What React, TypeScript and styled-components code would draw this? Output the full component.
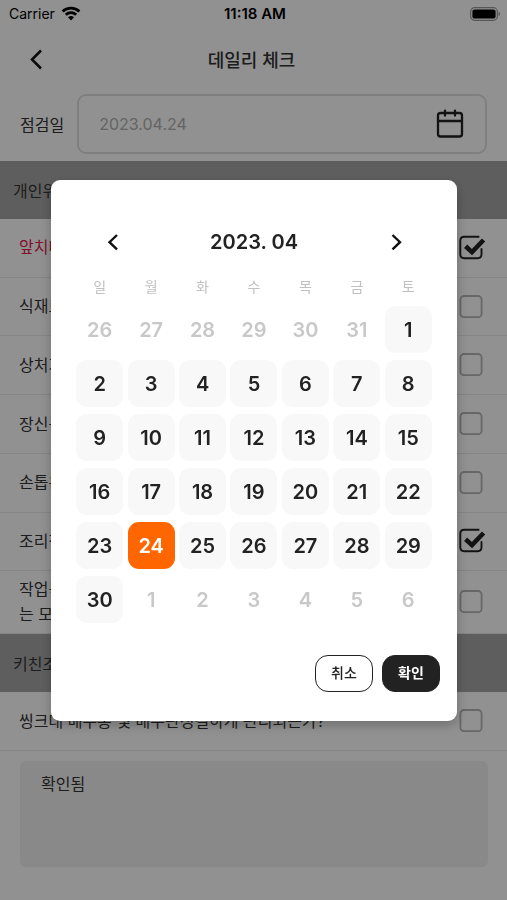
import React, { useState } from "react";
import styled, { createGlobalStyle } from "styled-components";

const GlobalStyle = createGlobalStyle`
  *, *::before, *::after { box-sizing: border-box; }
  body {
    margin: 0;
    background: #fff;
    color: #333;
    font-family: Inter, "Noto Sans CJK KR", sans-serif;
  }
  button, input, textarea { font: inherit; color: inherit; }
  button { cursor: pointer; }
`;

const Page = styled.div`
  min-height: 100vh;
`;

const StatusBar = styled.div`
  display: grid;
  grid-template-columns: 1fr auto 1fr;
  align-items: center;
  height: 27px;
  padding: 0 6px 0 9px;
  font-size: 14px;
  color: #000;
`;

const Carrier = styled.span`
  display: flex;
  align-items: center;
  gap: 6px;
`;

const Clock = styled.time`
  font-size: 15px;
  font-weight: 600;
`;

const Battery = styled.span`
  display: flex;
  justify-content: flex-end;
`;

const NavBar = styled.header`
  display: grid;
  grid-template-columns: 32px 1fr 32px;
  align-items: center;
  height: 63px;
  padding: 0 24px 0 20px;
`;

const IconButton = styled.button`
  display: grid;
  place-items: center;
  width: 32px;
  height: 32px;
  padding: 0;
  border: 0;
  background: none;
  color: #111;
`;

const Title = styled.h1`
  margin: 0;
  font-size: 18px;
  font-weight: 500;
  text-align: center;
`;

const DateRow = styled.div`
  display: flex;
  align-items: center;
  gap: 13px;
  padding: 4px 20px 7px;
`;

const DateLabel = styled.label`
  flex: none;
  font-size: 16px;
`;

const DateBox = styled.div`
  display: flex;
  flex: 1;
  align-items: center;
  height: 60px;
  min-width: 0;
  padding: 0 19px 0 20px;
  border: 2px solid #e0e0e0;
  border-radius: 9px;
`;

const DateInput = styled.input`
  flex: 1;
  min-width: 0;
  padding: 0;
  border: 0;
  outline: 0;
  background: none;
  font-size: 16px;
  color: #b0b0b0;
`;

const SectionTitle = styled.h2`
  display: flex;
  align-items: center;
  height: 58px;
  margin: 0;
  padding: 0 13px;
  background: #a6a6a6;
  font-size: 16px;
  font-weight: 400;
`;

const CheckList = styled.ul<{ $minHeight: number }>`
  display: flex;
  flex-direction: column;
  min-height: ${(p) => p.$minHeight}px;
  margin: 0;
  padding: 0;
  list-style: none;
`;

const CheckItem = styled.li<{ $tall?: boolean }>`
  display: flex;
  flex: 1 0 ${(p) => (p.$tall ? 62 : 58)}px;
  border-bottom: 1px solid #eaeaea;
`;

const CheckLabel = styled.label<{ $alert?: boolean }>`
  display: flex;
  flex: 1;
  align-items: center;
  justify-content: space-between;
  gap: 20px;
  padding: 0 20px 0 19px;
  font-size: 16px;
  line-height: 25px;
  color: ${(p) => (p.$alert ? "#e0204f" : "#333")};
`;

const ItemText = styled.span`
  white-space: pre-line;
`;

const TickWrap = styled.span`
  display: grid;
  flex: none;
  width: 28px;
  height: 28px;

  & > * { grid-area: 1 / 1; }
`;

const TickInput = styled.input`
  width: 28px;
  height: 28px;
  margin: 0;
  opacity: 0;
`;

const Notes = styled.div`
  padding: 10px 19px 32px 20px;
`;

const NotesArea = styled.textarea`
  display: block;
  width: 100%;
  height: 106px;
  padding: 11px 21px;
  border: 0;
  border-radius: 6px;
  outline: 0;
  resize: none;
  background: #f1f1f1;
  font-size: 16px;
  line-height: 24px;
`;

const Overlay = styled.div`
  position: fixed;
  inset: 0;
  display: flex;
  align-items: center;
  justify-content: center;
  padding: 0 50px 0 51px;
  background: rgba(0, 0, 0, 0.43);
`;

const Dialog = styled.section`
  width: 100%;
  max-width: 440px;
  padding: 46px 0 29px;
  border-radius: 9px;
  background: #fff;
  box-shadow: 0 4px 12px rgba(0, 0, 0, 0.25);
`;

const MonthBar = styled.div`
  display: flex;
  align-items: center;
  justify-content: space-between;
  padding: 0 45px;
`;

const MonthTitle = styled.h2`
  margin: 0;
  font-size: 20px;
  font-weight: 600;
  line-height: 32px;
  color: #222;
`;

const CalendarWrap = styled.div`
  padding: 13px 23px 0;
`;

const Calendar = styled.table`
  width: 100%;
  table-layout: fixed;
  border-collapse: collapse;
`;

const Weekday = styled.th`
  height: 32px;
  padding: 0;
  font-size: 14px;
  font-weight: 400;
  line-height: 20px;
  color: #c0c0c0;
`;

const DayCell = styled.td`
  height: 54px;
  padding: 0;
`;

const Day = styled.button<{ $outside: boolean; $selected: boolean }>`
  display: block;
  width: 47px;
  height: 47px;
  margin: 0 auto;
  padding: 0;
  border: 0;
  border-radius: 11px;
  font-size: 20px;
  font-weight: 600;
  background: ${(p) => (p.$selected ? "#ff6600" : p.$outside ? "transparent" : "#f8f8f8")};
  color: ${(p) => (p.$selected ? "#fff" : p.$outside ? "#c8c8c8" : "#222")};
`;

const Actions = styled.div`
  display: flex;
  justify-content: flex-end;
  gap: 9px;
  padding: 28px 17px 0;
`;

const ActionButton = styled.button<{ $primary?: boolean }>`
  width: 58px;
  height: 37px;
  padding: 0;
  border: 1px solid #222;
  border-radius: 13px;
  background: ${(p) => (p.$primary ? "#222" : "#fff")};
  color: ${(p) => (p.$primary ? "#fff" : "#222")};
  font-size: 14px;
  font-weight: ${(p) => (p.$primary ? 700 : 500)};
  line-height: 20px;
`;

function Chevron({ right = false }: { right?: boolean }) {
  return (
    <svg width="20" height="20" viewBox="0 0 20 20" fill="none" stroke="currentColor" strokeWidth="2.4" aria-hidden="true">
      <path d={right ? "M6.5 3l7.5 7.2-7.5 7.2" : "M15 3l-7.5 7.2 7.5 7.2"} />
    </svg>
  );
}

function BackIcon() {
  return (
    <svg width="24" height="24" viewBox="0 0 24 24" fill="none" stroke="currentColor" strokeWidth="2.5" aria-hidden="true">
      <path d="M17 3.5L8 12.5l9 9" />
    </svg>
  );
}

function WifiIcon() {
  return (
    <svg width="20" height="15" viewBox="0 0 20 15" fill="none" stroke="#000" strokeWidth="2.7" aria-hidden="true">
      <path d="M1.6 5.4a12.2 12.2 0 0 1 16.8 0" />
      <path d="M4.8 8.7a7.5 7.5 0 0 1 10.4 0" />
      <path d="M7 11.3a4.4 4.4 0 0 1 6 0L10 14.4z" fill="#000" stroke="none" />
    </svg>
  );
}

function BatteryIcon() {
  return (
    <svg width="31" height="14" viewBox="0 0 31 14" aria-hidden="true">
      <rect x="0.7" y="0.7" width="26.6" height="12.6" rx="3.8" fill="none" stroke="#000" strokeOpacity="0.4" strokeWidth="1.2" />
      <rect x="2.4" y="2.4" width="23.2" height="9.2" rx="2.2" fill="#000" />
      <path d="M28.6 4.8c2 .8 2 3.6 0 4.4z" fill="#000" fillOpacity="0.4" />
    </svg>
  );
}

function CalendarIcon() {
  return (
    <svg width="32" height="32" viewBox="0 0 32 32" fill="none" stroke="#222" strokeWidth="2.3" strokeLinecap="round" aria-hidden="true">
      <rect x="4" y="5" width="24" height="23.5" rx="2.6" />
      <path d="M4 13h24M11 2.6v5M21 2.6v5" />
    </svg>
  );
}

function TickIcon({ checked }: { checked: boolean }) {
  return (
    <svg width="28" height="28" viewBox="0 0 28 28" fill="none" aria-hidden="true">
      {checked ? (
        <>
          <path d="M19.6 2.7H5.2Q1.3 2.7 1.3 6.6V20.3Q1.3 24.2 5.2 24.2H18.6Q22.5 24.2 22.5 20.3V15" stroke="#222" strokeWidth="1.9" strokeLinecap="round" />
          <path d="M6.6 12.2l6.4 5.9L24.6 6" stroke="#222" strokeWidth="4.6" strokeLinejoin="miter" />
        </>
      ) : (
        <rect x="1.4" y="3" width="21.2" height="21.2" rx="3.5" stroke="#b5b5b5" strokeWidth="1.8" />
      )}
    </svg>
  );
}

type Item = { text: string; checked?: boolean; alert?: boolean; tall?: boolean };

const HYGIENE: Item[] = [
  { text: "앞치마", checked: true, alert: true },
  { text: "식재료" },
  { text: "상처가" },
  { text: "장신구" },
  { text: "손톱은" },
  { text: "조리장", checked: true },
  { text: "작업복\n는 모자", tall: true },
];

const KITCHEN: Item[] = [{ text: "씽크대 배수통 및 배수관청결하게 관리되는가?" }];

function ChecklistRow({ item }: { item: Item }) {
  const [checked, setChecked] = useState(Boolean(item.checked));
  return (
    <CheckItem $tall={item.tall}>
      <CheckLabel $alert={item.alert}>
        <ItemText>{item.text}</ItemText>
        <TickWrap>
          <TickInput type="checkbox" checked={checked} onChange={(e) => setChecked(e.target.checked)} />
          <TickIcon checked={checked} />
        </TickWrap>
      </CheckLabel>
    </CheckItem>
  );
}

const WEEKDAYS = ["일", "월", "화", "수", "목", "금", "토"];
const FIRST_OFFSET = 6;
const PREVIOUS_DAYS = 31;
const MONTH_DAYS = 30;

const WEEKS = Array.from({ length: 6 }, (_, week) =>
  Array.from({ length: 7 }, (_, column) => {
    const n = week * 7 + column - FIRST_OFFSET + 1;
    if (n < 1) return { day: PREVIOUS_DAYS + n, outside: true };
    if (n > MONTH_DAYS) return { day: n - MONTH_DAYS, outside: true };
    return { day: n, outside: false };
  })
);

function DatePicker() {
  const [selected, setSelected] = useState(24);
  return (
    <Dialog role="dialog" aria-modal="true" aria-labelledby="month">
      <MonthBar>
        <IconButton type="button" aria-label="이전 달"><Chevron /></IconButton>
        <MonthTitle id="month">2023. 04</MonthTitle>
        <IconButton type="button" aria-label="다음 달"><Chevron right /></IconButton>
      </MonthBar>
      <CalendarWrap>
        <Calendar>
          <thead>
            <tr>{WEEKDAYS.map((d) => <Weekday key={d} scope="col">{d}</Weekday>)}</tr>
          </thead>
          <tbody>
            {WEEKS.map((week, i) => (
              <tr key={i}>
                {week.map(({ day, outside }) => (
                  <DayCell key={day}>
                    <Day
                      type="button"
                      $outside={outside}
                      $selected={!outside && day === selected}
                      onClick={() => !outside && setSelected(day)}
                    >
                      {day}
                    </Day>
                  </DayCell>
                ))}
              </tr>
            ))}
          </tbody>
        </Calendar>
      </CalendarWrap>
      <Actions>
        <ActionButton type="button">취소</ActionButton>
        <ActionButton type="button" $primary>확인</ActionButton>
      </Actions>
    </Dialog>
  );
}

export default function App() {
  return (
    <>
      <GlobalStyle />
      <Page>
        <StatusBar>
          <Carrier>Carrier <WifiIcon /></Carrier>
          <Clock>11:18 AM</Clock>
          <Battery><BatteryIcon /></Battery>
        </StatusBar>
        <NavBar>
          <IconButton type="button" aria-label="뒤로"><BackIcon /></IconButton>
          <Title>데일리 체크</Title>
        </NavBar>
        <DateRow>
          <DateLabel htmlFor="check-date">점검일</DateLabel>
          <DateBox>
            <DateInput id="check-date" defaultValue="2023.04.24" />
            <CalendarIcon />
          </DateBox>
        </DateRow>
        <SectionTitle>개인위생</SectionTitle>
        <CheckList $minHeight={415}>
          {HYGIENE.map((item) => <ChecklistRow key={item.text} item={item} />)}
        </CheckList>
        <SectionTitle>키친조리</SectionTitle>
        <CheckList $minHeight={59}>
          {KITCHEN.map((item) => <ChecklistRow key={item.text} item={item} />)}
        </CheckList>
        <Notes>
          <NotesArea aria-label="메모" defaultValue="확인됨" />
        </Notes>
      </Page>
      <Overlay>
        <DatePicker />
      </Overlay>
    </>
  );
}
